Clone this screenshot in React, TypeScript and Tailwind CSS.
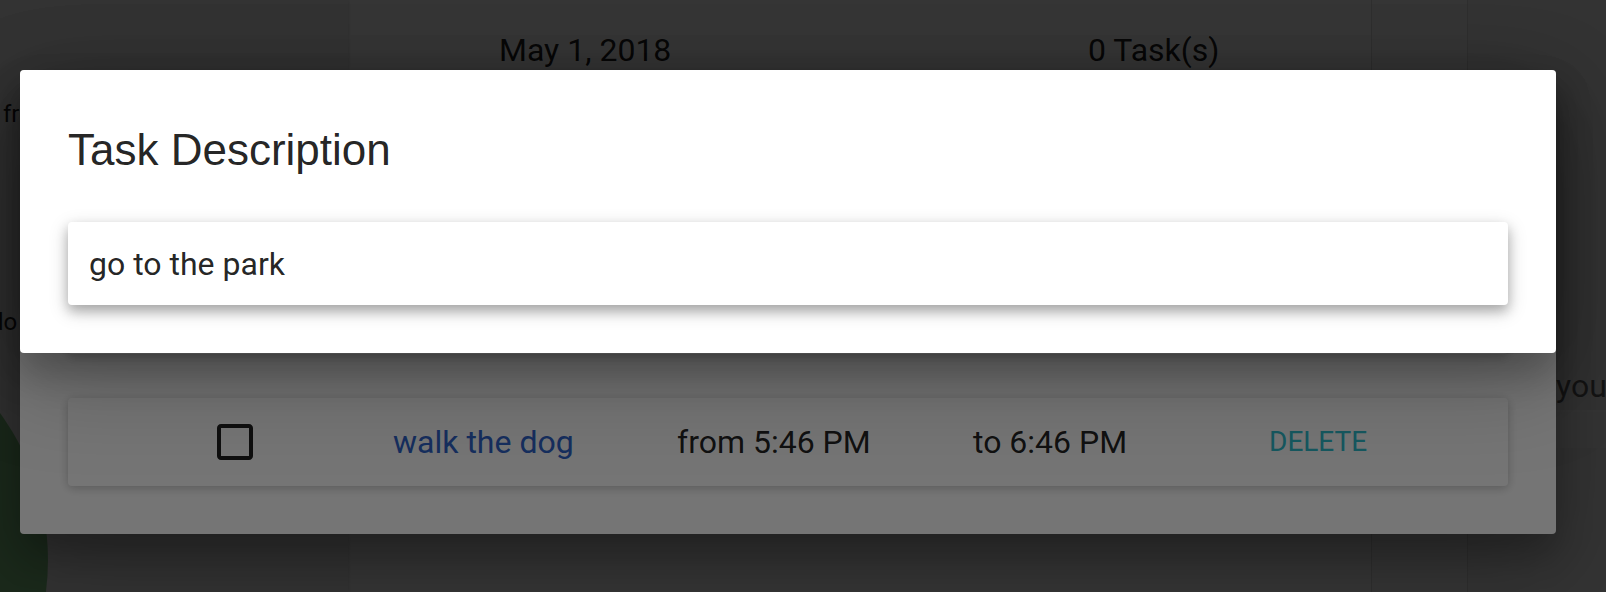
import React from 'react'

function CheckboxIcon() {
  return (
    <svg viewBox="0 0 24 24" className="h-[48px] w-[48px]" fill="rgba(0,0,0,0.87)">
      <path d="M19 5v14H5V5h14m0-2H5c-1.11 0-2 .9-2 2v14c0 1.1.89 2 2 2h14c1.1 0 2-.9 2-2V5c0-1.1-.9-2-2-2z" />
    </svg>
  )
}

function TaskRow({ name, from, to }: { name: string; from: string; to: string }) {
  return (
    <div className="flex h-[88px] shrink-0 items-center rounded-[4px] bg-white text-[32px] leading-[48px] text-black/87 shadow-[0_2px_12px_rgba(0,0,0,0.12),0_2px_8px_rgba(0,0,0,0.12)]">
      <div className="w-[325px] pl-[143px]">
        <CheckboxIcon />
      </div>
      <div className="w-[284px] text-[#3065cc]">{name}</div>
      <div className="w-[296px]">from {from}</div>
      <div className="w-[296px]">to {to}</div>
      <div className="text-[28px] uppercase text-[#30c0d0]">Delete</div>
    </div>
  )
}

export default function App() {
  return (
    <div className="relative h-[592px] w-[1606px] overflow-hidden bg-white font-['Roboto','Liberation_Sans',sans-serif] text-black/87">
      {/* page underneath */}
      <div className="flex h-full">
        <aside className="relative w-[348px] shrink-0 overflow-hidden bg-[#f2f2f2] shadow-[1px_0_3px_rgba(0,0,0,0.12)]">
          <p className="whitespace-nowrap pl-[3px] pt-[98px] text-[24px] leading-[32px]">from today</p>
          <p className="-ml-[10px] mt-[176px] whitespace-nowrap text-[24px] leading-[32px]">do</p>
          <div className="absolute -left-[450px] top-[311px] h-[498px] w-[498px] rounded-full bg-[#81c784]" />
        </aside>
        <main className="w-[1023px] shrink-0 bg-white">
          <div className="flex pt-[26px] text-[32px] leading-[48px]">
            <span className="w-[740px] pl-[151px]">May 1, 2018</span>
            <span>0 Task(s)</span>
          </div>
        </main>
        <div className="w-[97px] shrink-0 border-x border-[#dcdcdc] bg-[#fafafa]" />
        <div className="min-w-0 flex-1 overflow-hidden bg-[#f4f4f4] pt-[362px]">
          <div className="whitespace-nowrap border-b-2 border-white pl-[88px] text-[32px] leading-[48px] text-black/60">
            your task
          </div>
          <div className="h-[36px] bg-[#fafafa]" />
        </div>
      </div>

      {/* first overlay + task list dialog */}
      <div className="absolute inset-0 bg-black/54" />
      <div className="absolute left-[20px] top-[70px] flex h-[464px] w-[1536px] flex-col justify-end gap-[44px] rounded-[4px] bg-white px-[48px] pb-[48px] shadow-[0_28px_90px_rgba(0,0,0,0.25),0_20px_36px_rgba(0,0,0,0.22)]">
        <TaskRow name="go to the park" from="4:46 PM" to="5:46 PM" />
        <TaskRow name="walk the dog" from="5:46 PM" to="6:46 PM" />
      </div>

      {/* second overlay + description dialog */}
      <div className="absolute inset-0 bg-black/54" />
      <div className="absolute left-[20px] top-[70px] w-[1536px] rounded-[4px] bg-white px-[48px] py-[48px] shadow-[0_28px_90px_rgba(0,0,0,0.25),0_20px_36px_rgba(0,0,0,0.22)]">
        <h3 className="pb-[40px] font-['Liberation_Sans',sans-serif] text-[44px] leading-[64px] text-black/87">
          Task Description
        </h3>
        <div className="flex h-[83px] items-center rounded-[4px] bg-white px-[21px] text-[32px] text-black/87 shadow-[0_6px_20px_rgba(0,0,0,0.19),0_6px_12px_rgba(0,0,0,0.23)]">
          go to the park
        </div>
      </div>
    </div>
  )
}
